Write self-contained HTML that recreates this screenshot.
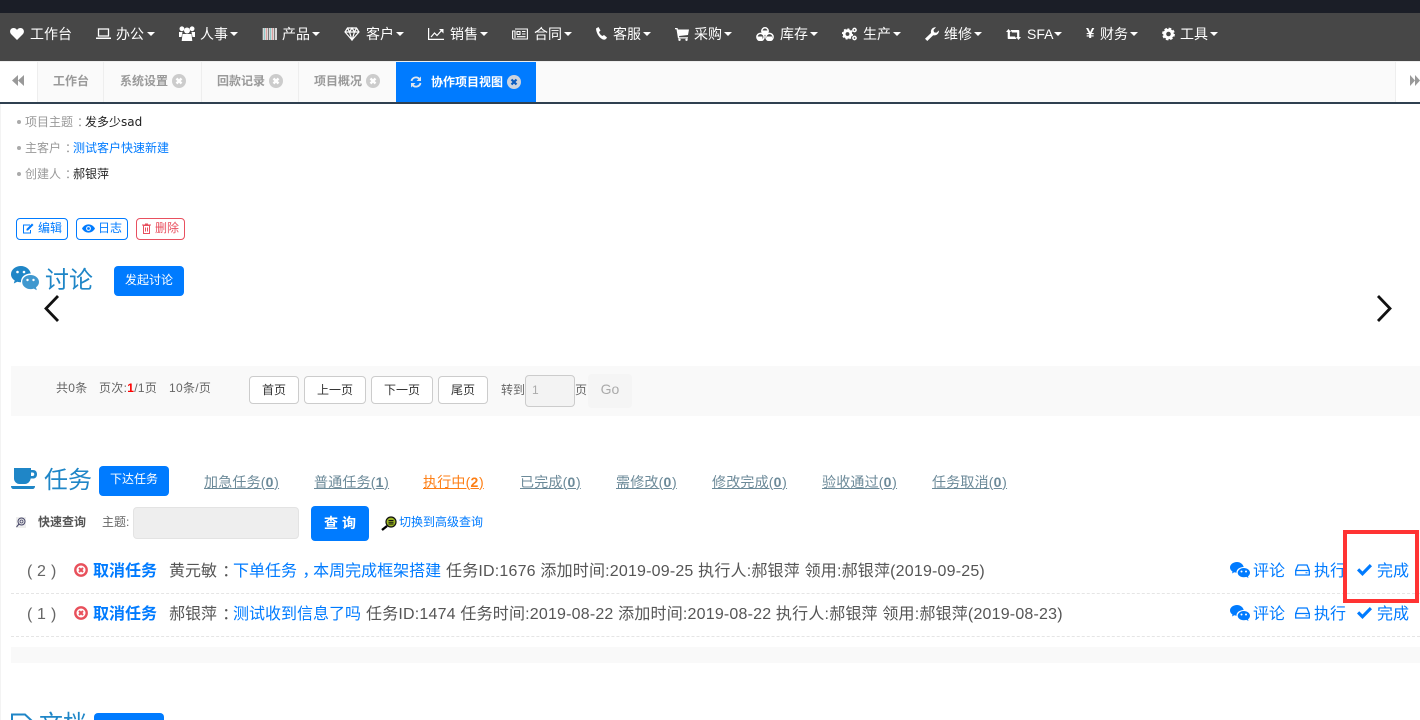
<!DOCTYPE html>
<html lang="zh-CN"><head><meta charset="utf-8"><title>协作项目视图</title>
<style>
html,body{margin:0;padding:0;background:#fff;width:1420px;height:720px;overflow:hidden}
#w{width:1420px;height:720px;position:relative;overflow:hidden;font-family:"Liberation Sans","Noto Sans CJK SC",sans-serif;font-size:12px;color:#555}
.a,.n,.t,.b,svg{position:absolute}
.t,.n,.b{white-space:nowrap}
.n{top:24px;font-size:14px;line-height:20px;color:#fff}
.c{position:absolute;top:32px;width:0;height:0;border:4px solid transparent;border-top-color:#fff;border-bottom:0}
.tab{top:62px;height:40px;line-height:38px;color:#999;font-weight:bold;background:#fafafa;border-right:1px solid #eee;position:absolute;white-space:nowrap}
.b{box-sizing:border-box;text-align:center;border-radius:4px}
.p{top:376px;height:28px;line-height:26px;border:1px solid #ccc;background:#fff;color:#333}
.prim{background:#007bff;color:#fff}
.o{top:218px;height:22px;line-height:19px;border:1px solid #007bff;color:#007bff;border-radius:4px}
.l{top:472px;font-size:14px;line-height:20px;color:#6c8a99;text-decoration:underline;letter-spacing:.2px}
.l b{font-weight:bold;letter-spacing:.7px}
.r{font-size:16px;line-height:22px}
.m{letter-spacing:.19px}
.blue{color:#007bff}
.q{position:relative;left:.33em}
.s{letter-spacing:.3px}
</style></head><body><div id="w">
<div class="a" style="left:0;top:0;width:1420px;height:13px;background:#1b1e27"></div>
<div class="a" style="left:0;top:13px;width:1420px;height:48px;background:#474747"></div>
<div class="a" style="left:0;top:61px;width:1420px;height:41px;background:#fafafa;border-top:1px solid #eee;box-sizing:border-box"></div>
<div class="a" style="left:0;top:102px;width:1420px;height:2px;background:#2f4050"></div>
<div class="a" style="left:0;top:104px;width:1px;height:616px;background:#f3f3f3"></div>

<!-- nav icons -->
<svg style="left:10px;top:27px" width="14" height="13" viewBox="0 0 14 13"><path fill="#fff" d="M7 13 1 7C-1 4.500 .5 1 3.500 1 5 1 6.300 1.800 7 3 7.700 1.800 9 1 10.500 1 13.500 1 15 4.500 13 7Z"/></svg>
<svg style="left:96px;top:28px" width="15" height="12" viewBox="0 0 15 12"><path fill="none" stroke="#fff" stroke-width="1.300" d="M2.500 1h10v7h-10z"/><path fill="#fff" d="M0 9.500h15V11H0z"/></svg>
<svg style="left:179px;top:26px" width="16" height="15" viewBox="0 0 16 15"><g fill="#fff"><circle cx="8" cy="4.500" r="3"/><circle cx="2.900" cy="2.800" r="2.400"/><circle cx="13.100" cy="2.800" r="2.400"/><path d="M3.500 8h9l.8 7H2.700zM0 6h3.500L2.500 11H0zM12.500 6H16v5h-2.500z"/></g></svg>
<svg style="left:262px;top:28px" width="15" height="12" viewBox="0 0 15 12"><rect width="15" height="12" fill="#d8d8d8"/><g stroke-width="1"><path stroke="#8fc8c8" d="M2.500 0v12M8.500 0v12"/><path stroke="#d9a0a0" d="M4.500 0v12M10.500 0v12"/><path stroke="#777" d="M.5 0v12M6.500 0v12M12.500 0v12"/></g></svg>
<svg style="left:344px;top:27px" width="16" height="14" viewBox="0 0 16 14"><path fill="none" stroke="#fff" stroke-width="1.200" d="M3.500 1h9L15 5 8 13 1 5ZM1 5h14M5.500 5 8 13l2.500-8M3.500 1l2 4 2.500-4 2.500 4 2-4"/></svg>
<svg style="left:428px;top:28px" width="16" height="12" viewBox="0 0 16 12"><path fill="none" stroke="#fff" stroke-width="1.200" d="M.6 0v11.400H16M3 9l3.500-4 2.500 2.500L14 2"/><path fill="#fff" d="M11 1h4.500v4.500z"/></svg>
<svg style="left:512px;top:28px" width="16" height="12" viewBox="0 0 16 12"><path fill="none" stroke="#fff" stroke-width="1.100" d="M3 1h12.400v10H1.500A1 1 0 0 1 .6 10V3H3v7M5 3.500h3v3H5zM10 3.500h3.500M10 6h3.500M5 8.700h8.500"/></svg>
<svg style="left:596px;top:27px" width="11" height="13" viewBox="0 0 11 13"><path fill="#fff" d="M0 1.500 2.500 0l2 3.500L3 5c.5 1.500 1.500 3 3.300 4L8 8l3 2.500C10 12.500 8.500 13.500 6 12 2.500 10 .2 5.500 0 1.500Z"/></svg>
<svg style="left:675px;top:28px" width="14" height="13" viewBox="0 0 14 13"><path fill="#fff" d="M0 0h2.500L3 1.500h11L13 7 4 8l.3 1.200H13v1.300H3L1.500 1.300H0Z"/><circle cx="4.500" cy="11.800" r="1.200" fill="#fff"/><circle cx="11.500" cy="11.800" r="1.200" fill="#fff"/></svg>
<svg style="left:756px;top:27px" width="18" height="14" viewBox="0 0 18 14"><g fill="#474747" stroke="#fff" stroke-width="1.500"><circle cx="9" cy="4" r="3.200"/><circle cx="4.500" cy="10" r="3.600"/><circle cx="13.500" cy="10" r="3.600"/></g><path fill="#fff" d="M6.500 3.500h5V7L9 8 6.500 7ZM1.500 9.500h5V13h-5ZM11 9.500h5V13h-5Z"/></svg>
<svg style="left:842px;top:27px" width="15" height="14" viewBox="0 0 15 14"><circle cx="5.500" cy="7" r="3.300" fill="none" stroke="#fff" stroke-width="2.800"/><circle cx="5.500" cy="7" r="5" fill="none" stroke="#fff" stroke-width="1.200" stroke-dasharray="2 1.900"/><circle cx="12.500" cy="3" r="1.600" fill="none" stroke="#fff" stroke-width="1.500"/><circle cx="12.500" cy="11" r="1.600" fill="none" stroke="#fff" stroke-width="1.500"/></svg>
<svg style="left:925px;top:27px" width="14" height="14" viewBox="0 0 14 14"><path fill="#fff" d="M0 11.800 6 6C5.300 3 7.500 0 11 .3L8.500 3l.5 2.300 2.300.5L14 3.500C14 7 11 9 8.200 8.200L2.300 14Z"/></svg>
<svg style="left:1006px;top:29px" width="15" height="11" viewBox="0 0 15 11"><path fill="#fff" d="M0 3 2.500 0 5 3H3.900v4.500H9L10.500 10H2.500a.8.800 0 0 1-.8-.8V3ZM15 8l-2.500 3L10 8h1.100V3.500H6L4.500 1h8a.8.800 0 0 1 .8.800V8Z"/></svg>
<div class="n" style="left:1086px;font-weight:bold;font-size:15px">¥</div>
<svg style="left:1162px;top:27px" width="13" height="14" viewBox="0 0 13 14"><circle cx="6.500" cy="7" r="3.800" fill="none" stroke="#fff" stroke-width="3"/><circle cx="6.500" cy="7" r="5.600" fill="none" stroke="#fff" stroke-width="1.600" stroke-dasharray="2.600 1.800"/></svg>

<div class="n" style="left:30px">工作台</div>
<div class="n" style="left:116px">办公</div><i class="c" style="left:147px"></i>
<div class="n" style="left:200px">人事</div><i class="c" style="left:230px"></i>
<div class="n" style="left:282px">产品</div><i class="c" style="left:312px"></i>
<div class="n" style="left:366px">客户</div><i class="c" style="left:396px"></i>
<div class="n" style="left:450px">销售</div><i class="c" style="left:480px"></i>
<div class="n" style="left:534px">合同</div><i class="c" style="left:564px"></i>
<div class="n" style="left:613px">客服</div><i class="c" style="left:643px"></i>
<div class="n" style="left:694px">采购</div><i class="c" style="left:724px"></i>
<div class="n" style="left:780px">库存</div><i class="c" style="left:810px"></i>
<div class="n" style="left:863px">生产</div><i class="c" style="left:893px"></i>
<div class="n" style="left:944px">维修</div><i class="c" style="left:974px"></i>
<div class="n" style="left:1027px">SFA</div><i class="c" style="left:1054px"></i>
<div class="n" style="left:1100px">财务</div><i class="c" style="left:1130px"></i>
<div class="n" style="left:1180px">工具</div><i class="c" style="left:1210px"></i>

<!-- tabs -->
<div class="a" style="left:0;top:62px;width:37px;height:40px;background:#fff;border-right:1px solid #eee"></div>
<svg style="left:12px;top:75px" width="12" height="11" viewBox="0 0 12 11"><path fill="#999" d="M6 0v11L0 5.500ZM12 0v11L6 5.500Z"/></svg>
<div class="tab" style="left:38px;width:50px;padding-left:15px">工作台</div>
<div class="tab" style="left:105px;width:81px;padding-left:15px">系统设置</div>
<div class="tab" style="left:202px;width:81px;padding-left:15px">回款记录</div>
<div class="tab" style="left:299px;width:82px;padding-left:15px">项目概况</div>
<svg style="left:172px;top:74px" width="14" height="14" viewBox="0 0 14 14"><circle cx="7" cy="7" r="7" fill="#ccc"/><path stroke="#fff" stroke-width="2.400" d="M4.500 4.500l5 5M9.500 4.500l-5 5"/></svg>
<svg style="left:269px;top:74px" width="14" height="14" viewBox="0 0 14 14"><circle cx="7" cy="7" r="7" fill="#ccc"/><path stroke="#fff" stroke-width="2.400" d="M4.500 4.500l5 5M9.500 4.500l-5 5"/></svg>
<svg style="left:366px;top:74px" width="14" height="14" viewBox="0 0 14 14"><circle cx="7" cy="7" r="7" fill="#ccc"/><path stroke="#fff" stroke-width="2.400" d="M4.500 4.500l5 5M9.500 4.500l-5 5"/></svg>
<div class="a" style="left:396px;top:62px;width:140px;height:40px;background:#007bff"></div>
<svg style="left:410px;top:76px" width="12" height="12" viewBox="0 0 12 12"><g fill="none" stroke="#dfe6ee" stroke-width="1.800"><path d="M1.500 5A4.600 4.600 0 0 1 9.500 3"/><path d="M10.500 7A4.600 4.600 0 0 1 2.500 9"/></g><path fill="#dfe6ee" d="M11 .5V5H6.500ZM1 11.500V7h4.500Z"/></svg>
<div class="t" style="left:431px;top:62px;line-height:40px;color:#fff;font-weight:bold">协作项目视图</div>
<svg style="left:507px;top:75px" width="14" height="14" viewBox="0 0 14 14"><circle cx="7" cy="7" r="7" fill="#ccd3dd"/><path stroke="#0a5cc0" stroke-width="2.200" d="M4.500 4.500l5 5M9.500 4.500l-5 5"/></svg>
<div class="a" style="left:1395px;top:62px;width:25px;height:40px;background:#fff;border-left:1px solid #eee;box-sizing:border-box"></div>
<svg style="left:1410px;top:75px" width="10" height="11" viewBox="0 0 10 11"><path fill="#999" d="M0 0v11l5-5.500ZM5 0v11l5-5.500Z"/></svg>

<!-- info -->
<div class="a" style="left:17px;top:120px;width:4px;height:4px;border-radius:2px;background:#aaa"></div>
<div class="a" style="left:17px;top:146px;width:4px;height:4px;border-radius:2px;background:#aaa"></div>
<div class="a" style="left:17px;top:172px;width:4px;height:4px;border-radius:2px;background:#aaa"></div>
<div class="t" style="left:25px;top:113px;line-height:18px;color:#999">项目主题<span class="q">：</span><span style="color:#222">发多少<span style="font-family:'DejaVu Sans',sans-serif;line-height:1">sad</span></span></div>
<div class="t" style="left:25px;top:139px;line-height:18px;color:#999">主客户<span class="q">：</span><span class="blue">测试客户快速新建</span></div>
<div class="t" style="left:25px;top:165px;line-height:18px;color:#999">创建人<span class="q">：</span><span style="color:#222">郝银萍</span></div>

<div class="b o" style="left:16px;width:52px;text-align:left;padding-left:21px">编辑</div>
<svg style="left:22px;top:223px" width="12" height="11" viewBox="0 0 12 11"><path fill="none" stroke="#007bff" d="M8 2H1.500v8h7V7"/><path fill="#007bff" d="M4.500 6 10 .5 11.500 2 6 7.500H4.500Z"/></svg>
<div class="b o" style="left:76px;width:52px;text-align:left;padding-left:21px">日志</div>
<svg style="left:82px;top:224px" width="13" height="9" viewBox="0 0 13 9"><path fill="#007bff" d="M0 4.500C3 -1 10 -1 13 4.500 10 10 3 10 0 4.500Z"/><circle cx="6.500" cy="4.500" r="2.400" fill="#fff"/><circle cx="6.500" cy="4.500" r="1.400" fill="#007bff"/></svg>
<div class="b o" style="left:136px;width:49px;text-align:left;padding-left:18px;border-color:#e8505f;color:#e8505f">删除</div>
<svg style="left:142px;top:223px" width="9" height="11" viewBox="0 0 9 11"><path fill="none" stroke="#e8505f" d="M1.500 2.500h6v8h-6zM0 2h9M3 1h3M3.500 4.500v4M5.500 4.500v4"/></svg>

<!-- discussion -->
<svg style="left:11px;top:266px" width="28" height="25" viewBox="0 0 28 25"><path fill="#1f86c7" d="M10 0C4.500 0 0 3.700 0 8.200c0 2.600 1.400 4.700 3.700 6.200L2.800 17.500l3.500-1.800c1.200.4 2.400.5 3.700.6C9.700 11 14 7.500 19.800 7.500 18.800 3.200 14.800 0 10 0Z"/><path fill="#1f86c7" d="M19.500 9C24 9 28 12 28 16c0 2.200-1.200 4-3 5.300l.8 3-3-1.700c-1.200.4-2.200.5-3.300.5-4.600 0-8.300-3.200-8.300-7C11 12 15 9 19.500 9Z" opacity=".85"/><circle cx="6.500" cy="6" r="1.300" fill="#fff"/><circle cx="13" cy="6" r="1.300" fill="#fff"/><circle cx="16.500" cy="14" r="1.200" fill="#fff"/><circle cx="22.500" cy="14" r="1.200" fill="#fff"/></svg>
<div class="t" style="left:45px;top:264px;font-size:24px;line-height:34px;color:#1f86c7">讨论</div>
<div class="b prim" style="left:114px;top:266px;width:70px;height:30px;line-height:28px">发起讨论</div>
<svg style="left:40px;top:293px" width="24" height="32" viewBox="0 0 24 32"><path fill="none" stroke="#111" stroke-width="2.800" d="M18 3 6 15.500 18 28"/></svg>
<svg style="left:1372px;top:293px" width="24" height="32" viewBox="0 0 24 32"><path fill="none" stroke="#111" stroke-width="2.800" d="M6 3 18 15.500 6 28"/></svg>

<!-- pager -->
<div class="a" style="left:11px;top:366px;width:1409px;height:50px;background:#f9f9f9"></div>
<div class="t s" style="left:56px;top:379px;line-height:18px;color:#666">共0条</div>
<div class="t s" style="left:99px;top:379px;line-height:18px;color:#666">页次:<b style="color:#f00">1</b>/1页</div>
<div class="t s" style="left:169px;top:379px;line-height:18px;color:#666">10条/页</div>
<div class="b p" style="left:249px;width:50px">首页</div>
<div class="b p" style="left:304px;width:62px">上一页</div>
<div class="b p" style="left:371px;width:62px">下一页</div>
<div class="b p" style="left:438px;width:50px">尾页</div>
<div class="t" style="left:501px;top:381px;line-height:18px;color:#666">转到</div>
<div class="b" style="left:525px;top:375px;width:50px;height:32px;background:#f3f3f3;border:1px solid #ccc;text-align:left;padding-left:6px;line-height:28px;color:#aaa">1</div>
<div class="t" style="left:575px;top:381px;line-height:18px;color:#666">页</div>
<div class="b" style="left:588px;top:374px;width:44px;height:34px;background:#f5f5f5;color:#aaa;font-size:14px;line-height:30px">Go</div>

<!-- tasks -->
<svg style="left:11px;top:468px" width="26" height="22" viewBox="0 0 26 22"><path fill="#1f86c7" d="M3 0h17v2h2c2.500 0 4 1.700 4 4.200S24.500 10.500 22 10.500h-2.300C19 14 16.500 16 14 16H8.500C5.500 16 3 13.500 3 10.500ZM20 4.500V8h1.500c1 0 1.800-.7 1.800-1.800S22.500 4.500 21.500 4.500Z"/><path fill="#1f86c7" d="M0 18h24c0 2-1.200 3-2.500 3H2.500C1.200 21 0 20 0 18Z"/></svg>
<div class="t" style="left:44px;top:464px;font-size:24px;line-height:34px;color:#1f86c7">任务</div>
<div class="b prim" style="left:99px;top:466px;width:70px;height:30px;line-height:27px">下达任务</div>
<div class="t l" style="left:204px">加急任务(<b>0</b>)</div>
<div class="t l" style="left:314px">普通任务(<b>1</b>)</div>
<div class="t l" style="left:423px;color:#fd7e14">执行中(<b>2</b>)</div>
<div class="t l" style="left:520px">已完成(<b>0</b>)</div>
<div class="t l" style="left:616px">需修改(<b>0</b>)</div>
<div class="t l" style="left:712px">修改完成(<b>0</b>)</div>
<div class="t l" style="left:822px">验收通过(<b>0</b>)</div>
<div class="t l" style="left:932px">任务取消(<b>0</b>)</div>

<svg style="left:16px;top:517px" width="10" height="11" viewBox="0 0 10 11"><rect width="10" height="11" fill="#eee"/><circle cx="5.500" cy="4.500" r="3.500" fill="none" stroke="#446" stroke-width="1"/><circle cx="5.500" cy="4.500" r="1.500" fill="none" stroke="#446" stroke-width=".8"/><path stroke="#446" d="M3 7 .5 10"/></svg>
<div class="t" style="left:38px;top:513px;line-height:18px;color:#555;font-weight:bold">快速查询</div>
<div class="t" style="left:102px;top:513px;line-height:18px;color:#666">主题:</div>
<div class="b" style="left:133px;top:507px;width:166px;height:32px;background:#eee;border:1px solid #e3e3e3"></div>
<div class="b prim" style="left:311px;top:506px;width:58px;height:35px;line-height:34px;font-size:14px;font-weight:bold;letter-spacing:4px;padding-left:4px">查询</div>
<svg style="left:381px;top:516px" width="16" height="15" viewBox="0 0 16 15"><circle cx="10" cy="6" r="5" fill="#9ab520" stroke="#111" stroke-width="1.200"/><path stroke="#111" stroke-width="1" d="M7.500 4.500h5M7.500 6.300h5M7.500 8h5"/><path stroke="#000" stroke-width="2.400" d="M6 10 1 14"/></svg>
<div class="t blue" style="left:399px;top:513px;line-height:18px">切换到高级查询</div>

<!-- rows -->
<div class="t r" style="left:27px;top:561px;color:#666">(</div><div class="t r" style="left:37px;top:561px;color:#666">2</div><div class="t r" style="left:51px;top:561px;color:#666">)</div>
<svg style="left:74px;top:563px" width="14" height="14" viewBox="0 0 14 14"><circle cx="7" cy="7" r="5.700" fill="none" stroke="#e8505b" stroke-width="2.400"/><path stroke="#e8505b" stroke-width="2" d="M5 5l4 4M9 5 5 9"/></svg>
<div class="t r" style="left:93px;top:561px;font-weight:bold;color:#007bff">取消任务</div>
<div class="t r" style="left:169px;top:561px">黄元敏<span class="q">：</span><span class="blue">下单任务<span class="q">，</span>本周完成框架搭建</span></div>
<div class="t r m" style="left:446px;top:561px">任务ID:1676 添加时间:2019-09-25 执行人:郝银萍 领用:郝银萍(2019-09-25)</div>
<div class="a" style="left:11px;top:593px;width:1409px;border-top:1px dashed #e5e5e5"></div>

<div class="t r" style="left:27px;top:604px;color:#666">(</div><div class="t r" style="left:37px;top:604px;color:#666">1</div><div class="t r" style="left:51px;top:604px;color:#666">)</div>
<svg style="left:74px;top:606px" width="14" height="14" viewBox="0 0 14 14"><circle cx="7" cy="7" r="5.700" fill="none" stroke="#e8505b" stroke-width="2.400"/><path stroke="#e8505b" stroke-width="2" d="M5 5l4 4M9 5 5 9"/></svg>
<div class="t r" style="left:93px;top:604px;font-weight:bold;color:#007bff">取消任务</div>
<div class="t r" style="left:169px;top:604px">郝银萍<span class="q">：</span><span class="blue">测试收到信息了吗</span></div>
<div class="t r m" style="left:366px;top:604px">任务ID:1474 任务时间:2019-08-22 添加时间:2019-08-22 执行人:郝银萍 领用:郝银萍(2019-08-23)</div>
<div class="a" style="left:11px;top:636px;width:1409px;border-top:1px dashed #e5e5e5"></div>
<div class="a" style="left:11px;top:647px;width:1409px;height:16px;background:#f9f9f9"></div>

<!-- actions row 1 -->
<svg style="left:1230px;top:562px" width="20" height="16" viewBox="0 0 20 16"><path fill="#007bff" d="M7 0C3 0 0 2.500 0 5.500c0 1.700 1 3.100 2.500 4.100L2 11.500l2.300-1.200c.8.200 1.500.3 2.200.4C6.200 7.500 9.500 5 13.700 5 13 2.200 10.300 0 7 0Z"/><path fill="#007bff" d="M13.700 6C17 6 20 8 20 10.800c0 1.500-.9 2.700-2 3.600l.5 1.600-2.100-1.100c-.9.200-1.800.4-2.700.4-3.300 0-6-2.100-6-4.500S10.400 6 13.700 6Z"/><circle cx="11.500" cy="9.500" r="1" fill="#fff"/><circle cx="16" cy="9.500" r="1" fill="#fff"/></svg>
<div class="t r blue" style="left:1253px;top:561px">评论</div>
<svg style="left:1295px;top:564px" width="15" height="12" viewBox="0 0 15 12"><path fill="none" stroke="#007bff" stroke-width="1.300" d="M3 1h9l2.300 5.500V11H.7V6.500ZM.7 6.500h13.600"/><path stroke="#007bff" d="M10.500 8.800h2"/></svg>
<div class="t r blue" style="left:1314px;top:561px">执行</div>
<svg style="left:1357px;top:564px" width="15" height="12" viewBox="0 0 15 12"><path fill="#007bff" d="M0 6.500 2.200 4.300 5.500 7.500 12.800 0 15 2.200 5.500 12Z"/></svg>
<div class="t r blue" style="left:1377px;top:561px">完成</div>
<!-- actions row 2 -->
<svg style="left:1230px;top:605px" width="20" height="16" viewBox="0 0 20 16"><path fill="#007bff" d="M7 0C3 0 0 2.500 0 5.500c0 1.700 1 3.100 2.500 4.100L2 11.500l2.300-1.200c.8.200 1.500.3 2.200.4C6.200 7.500 9.500 5 13.700 5 13 2.200 10.300 0 7 0Z"/><path fill="#007bff" d="M13.700 6C17 6 20 8 20 10.800c0 1.500-.9 2.700-2 3.600l.5 1.600-2.100-1.100c-.9.200-1.800.4-2.700.4-3.300 0-6-2.100-6-4.500S10.400 6 13.700 6Z"/><circle cx="11.500" cy="9.500" r="1" fill="#fff"/><circle cx="16" cy="9.500" r="1" fill="#fff"/></svg>
<div class="t r blue" style="left:1253px;top:604px">评论</div>
<svg style="left:1295px;top:607px" width="15" height="12" viewBox="0 0 15 12"><path fill="none" stroke="#007bff" stroke-width="1.300" d="M3 1h9l2.300 5.500V11H.7V6.500ZM.7 6.500h13.600"/><path stroke="#007bff" d="M10.500 8.800h2"/></svg>
<div class="t r blue" style="left:1314px;top:604px">执行</div>
<svg style="left:1357px;top:607px" width="15" height="12" viewBox="0 0 15 12"><path fill="#007bff" d="M0 6.500 2.200 4.300 5.500 7.500 12.800 0 15 2.200 5.500 12Z"/></svg>
<div class="t r blue" style="left:1377px;top:604px">完成</div>

<div class="a" style="left:1343px;top:530px;width:76px;height:73px;box-sizing:border-box;border:4px solid #f33"></div>

<!-- docs -->
<svg style="left:11px;top:713px" width="22" height="7" viewBox="0 0 22 7"><path fill="none" stroke="#1f86c7" stroke-width="2" d="M1 8V1.500h13L21 8"/></svg>
<div class="t" style="left:39px;top:708px;font-size:24px;line-height:34px;color:#1f86c7">文档</div>
<div class="b prim" style="left:94px;top:713px;width:70px;height:30px"></div>
</div></body></html>
